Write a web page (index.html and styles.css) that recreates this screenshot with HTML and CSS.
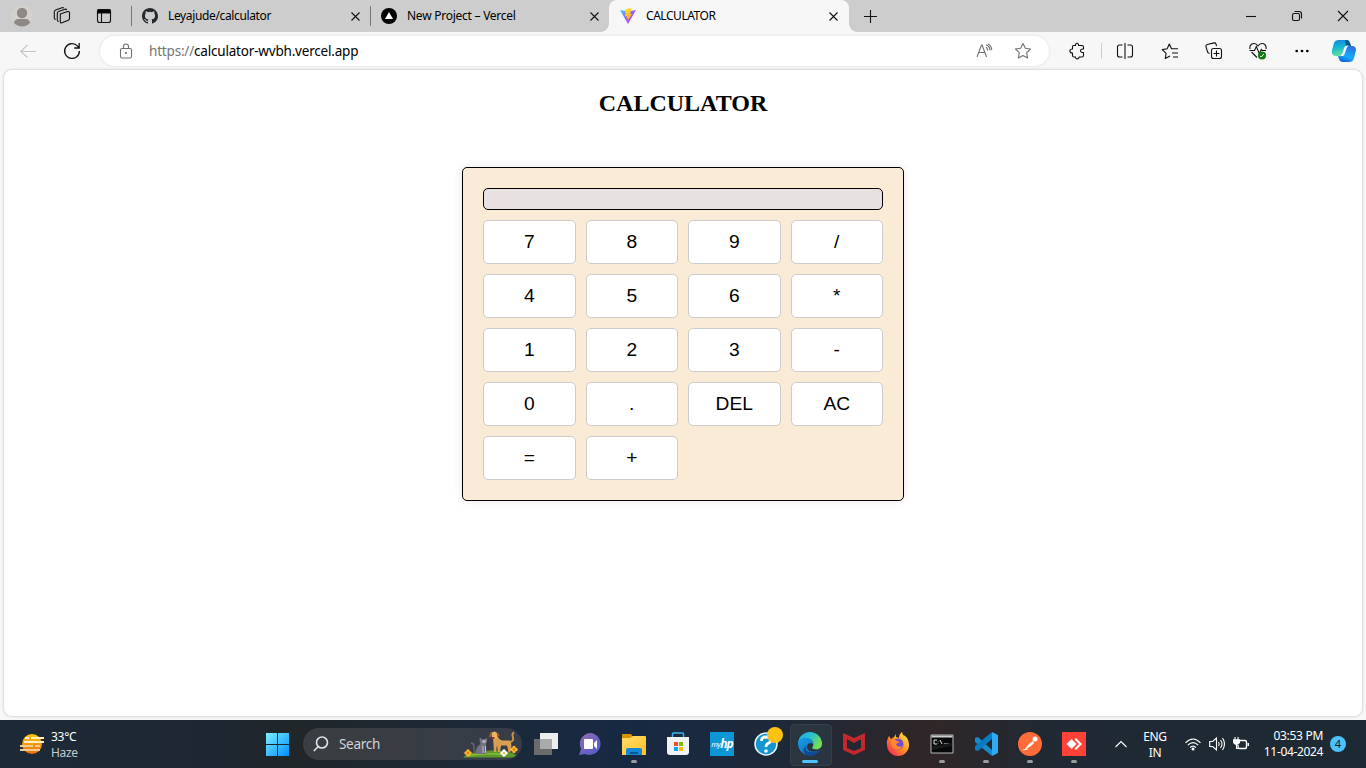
FILE: index.html
```
<!DOCTYPE html>
<html lang="en">
<head>
<meta charset="utf-8">
<title>CALCULATOR</title>
<link rel="stylesheet" href="styles.css">
</head>
<body>
<div class="browser">
  <header class="tabbar">
    <div class="tab-tools">
      <svg width="22" height="22" viewBox="0 0 22 22"><circle cx="11" cy="11" r="10.7" fill="#d5d2ce"/><circle cx="11" cy="8" r="5.2" fill="#8e8984"/><path d="M3 18c0-2 2-4 4-4h8c2 0 4 2 4 4a11 11 0 0 1-16 0z" fill="#8e8984"/></svg>
      <svg class="line" width="18" height="18" viewBox="0 0 18 18"><path d="M7.3 7 14.5 4.6Q16.5 4 16.5 6v5.5q0 1.300-1.200 1.800L9 15.800Q7.300 16.400 7.300 14.500zM4.300 13.500V6.500q0-1.500 1.300-2L12 2.200q1.200-.4 1.700.7M1.300 11.500V5q0-1.500 1.300-2L9 .8q1.200-.4 1.700.5M1.300 11.500l1.200 1.200M4.300 13.500l1.200 1.200"/></svg>
      <svg class="line" width="16" height="16" viewBox="0 0 16 16"><rect x="1.500" y="1.500" width="13" height="13" rx="2"/><path d="M1.500 3Q1.500 1.500 3 1.500h10q1.500 0 1.500 1.500v2h-13z" fill="#000"/><path d="M5.500 5v9"/></svg>
    </div>
    <div class="tab">
      <svg width="16" height="16" viewBox="0 0 16 16"><path fill="#24292f" d="M8 0C3.580 0 0 3.580 0 8c0 3.540 2.290 6.530 5.470 7.590.4.070.55-.17.55-.38 0-.19-.01-.82-.01-1.490-2.010.37-2.530-.49-2.690-.94-.09-.23-.48-.94-.82-1.130-.28-.15-.68-.52-.01-.53.63-.01 1.080.58 1.230.82.72 1.210 1.870.87 2.330.66.070-.52.28-.87.51-1.070-1.780-.2-3.640-.89-3.640-3.950 0-.87.31-1.590.82-2.150-.08-.2-.36-1.020.08-2.120 0 0 .67-.21 2.200.82a7.600 7.600 0 0 1 4 0c1.530-1.040 2.200-.82 2.200-.82.44 1.100.16 1.920.08 2.120.51.56.82 1.270.82 2.150 0 3.070-1.870 3.750-3.650 3.950.29.25.54.73.54 1.480 0 1.070-.01 1.930-.01 2.200 0 .21.15.46.55.38A8 8 0 0 0 8 0z"/></svg>
      <span class="tab-title t1">Leyajude/calculator</span>
      <svg class="line" width="9" height="9" viewBox="0 0 9 9"><path d="m.5.500 8 8m0-8-8 8"/></svg>
    </div>
    <div class="tab">
      <svg width="16" height="16" viewBox="0 0 16 16"><circle cx="8" cy="8" r="8"/><path d="m8 4 4 7H4z" fill="#fff"/></svg>
      <span class="tab-title t2">New Project – Vercel</span>
      <svg class="line" width="9" height="9" viewBox="0 0 9 9"><path d="m.5.500 8 8m0-8-8 8"/></svg>
    </div>
    <div class="tab active">
      <svg width="16" height="16" viewBox="0 0 16 16"><defs><linearGradient id="va" x2="1" y2=".8"><stop stop-color="#41d1ff"/><stop offset=".5" stop-color="#8d67fe"/><stop offset="1" stop-color="#bd34fe"/></linearGradient><linearGradient id="vb" x2="0" y2="1"><stop stop-color="#ffdd35"/><stop offset="1" stop-color="#ffa800"/></linearGradient></defs><path d="M0 2 8 3.500 16 2 8 16z" fill="url(#va)"/><path d="m11.500 0-6 1.200L5 8.300l2-.4-.6 2.700 1.700-.5-.6 3.500L12 5.800l-2 .4 1.500-5z" fill="url(#vb)"/></svg>
      <span class="tab-title t3">CALCULATOR</span>
      <svg class="line" width="9" height="9" viewBox="0 0 9 9"><path d="m.5.500 8 8m0-8-8 8"/></svg>
    </div>
    <svg class="line new-tab" width="15" height="15" viewBox="0 0 15 15"><path d="M7.500 1v13M1 7.500h13"/></svg>
    <div class="window-controls">
      <svg class="line" width="12" height="12" viewBox="0 0 12 12"><path d="M1 6.500h10"/></svg>
      <svg class="line" width="12" height="12" viewBox="0 0 12 12"><rect x="1.500" y="3.500" width="7" height="7" rx="1.500"/><path d="M3.500 1.500H8q2.500 0 2.500 2.500v4.500"/></svg>
      <svg class="line" width="12" height="12" viewBox="0 0 12 12"><path d="m1 1 10 10M11 1 1 11"/></svg>
    </div>
  </header>
  <div class="toolbar">
    <div class="nav">
      <svg class="line faint" width="16" height="14" viewBox="0 0 16 14"><path d="M16 7.500H1M7.500.8.800 7.500l6.700 6"/></svg>
      <svg class="line reload" width="18" height="18" viewBox="0 0 18 18"><path d="M16.400 9A7.400 7.400 0 1 1 14.600 4.200L16 6M16.200 1v5h-5"/></svg>
    </div>
    <div class="address">
      <svg class="line gray" width="14" height="16" viewBox="0 0 14 16"><rect x="1.500" y="5.500" width="11" height="9.500" rx="1.500"/><path d="M4.500 5.500V3.500a2.500 2.500 0 0 1 5 0v2"/><circle cx="7" cy="10" r=".5" fill="#555"/></svg>
      <span class="url"><span class="scheme">https://</span>calculator-wvbh.vercel.app</span>
      <svg class="line gray" width="16" height="16" viewBox="0 0 16 16"><path d="m1 14 4.500-12h.6L10.500 14M2.700 9.500h6.200M10 4.300q1.700 1 1.700 3.200M9.800 1.800q4.200 1.500 4.200 5.700M12 1q3.700 2 3.700 6"/></svg>
      <svg class="line gray" width="18" height="18" viewBox="0 0 18 18"><path d="m9 1.500 2.300 4.800 5.200.7-3.800 3.700.9 5.300L9 13.500 4.400 16l.9-5.300L1.500 7l5.200-.7z" stroke-linejoin="round"/></svg>
    </div>
    <div class="actions">
      <svg class="line a1" width="16" height="18" viewBox="0 0 16 18"><path d="M4.500 3.500h2C6 .5 10 .5 9.500 3.500H13q1.500 0 1.500 1.500v2c-4-.5-4 4 0 3.500v3q0 1.500-1.500 1.500h-3c.3 2.500-3.700 2.500-3.500 0H5q-1.500 0-1.500-1.500V11c-3.500 0-3.500-4 0-4V4.500q0-1 1-1z" stroke-linejoin="round"/></svg>
      <i class="divider"></i>
      <svg class="line a2" width="16" height="16" viewBox="0 0 16 16"><path d="M8 0v16M5.500 2H2.500Q.5 2 .5 4v8q0 2 2 2h3M10.500 2h3q2 0 2 2v8q0 2-2 2h-3"/></svg>
      <svg class="line a3" width="18" height="18" viewBox="0 0 18 18"><path d="M9 14 4.300 16.500l.8-5.200L1.200 7.600l5-.8L8.300 2l2.200 4.700H17M11 11h6M12 15h5" stroke-linejoin="round"/></svg>
      <svg class="line a4" width="18" height="18" viewBox="0 0 18 18"><rect x="6.500" y="6.500" width="10" height="10" rx="2"/><path d="M11.500 8.500v6m-3-3h6M4.500 11.500 2.700 10.500.9 4.500Q.7 3 2.200 2.500L9 .9q1.500-.3 2 1l.5 2.200"/></svg>
      <svg class="a5" width="18" height="18" viewBox="0 0 18 18"><path class="line" d="M1 7C0 1.500 6-.5 9 4c3-4.500 9-2.500 8 3M2.500 10 8 15.500M.500 8.500h5l1.800-4 3 7 2-4 1 1H17"/><circle cx="13" cy="13.500" r="4" fill="#107c10"/><path d="m11.300 14 1 1 2.500-3" stroke="#fff" fill="none"/></svg>
      <svg class="a6" width="14" height="4" viewBox="0 0 14 4"><circle cx="1.700" cy="2" r="1.350"/><circle cx="7" cy="2" r="1.350"/><circle cx="12.300" cy="2" r="1.350"/></svg>
      <svg class="a7" width="24" height="24" viewBox="0 0 24 24"><defs><linearGradient id="ca" x2=".2" y2="1"><stop stop-color="#1684d8"/><stop offset=".45" stop-color="#12b2d6"/><stop offset="1" stop-color="#64dfa0"/></linearGradient><linearGradient id="cb" x1=".6" x2=".2" y2="1"><stop stop-color="#2b71e6"/><stop offset=".6" stop-color="#13adf9"/><stop offset="1" stop-color="#1755dc"/></linearGradient></defs><path d="M7 1h8q2 0 3 3l1 3h-4q-2 0-3 3l-1 4q-1 3-4 3H4q-5 0-4-6L2 4q1-3 5-3z" fill="url(#ca)"/><path d="M13 1h2q2 0 3 3l1 3h-5z" fill="#075b8b"/><path d="M17 7h3q4 0 4 4l-2 8q-1 4-5 4H10q-2 0-3-3l-1-3h2q2 0 3-3l1.500-4Q14 7 17 7z" fill="url(#cb)"/><path d="M15 6.500q-2 0-3 3L10.500 14q-.8 2.500-2.500 3h2.500q1.500 0 2.300-2.500l1.700-5q.8-2.500 2.500-3z" fill="#f7f7f7"/></svg>
    </div>
  </div>
  <main class="page">
    <h2 class="title">CALCULATOR</h2>
    <section class="calculator">
      <div class="display"></div>
      <div class="keys">
        <button>7</button><button>8</button><button>9</button><button>/</button>
        <button>4</button><button>5</button><button>6</button><button>*</button>
        <button>1</button><button>2</button><button>3</button><button>-</button>
        <button>0</button><button>.</button><button>DEL</button><button>AC</button>
        <button>=</button><button>+</button>
      </div>
    </section>
  </main>
</div>
<footer class="taskbar">
  <div class="weather">
    <svg width="24" height="22" viewBox="0 0 24 22"><defs><linearGradient id="su" x2="0" y2="1"><stop stop-color="#ffc400"/><stop offset="1" stop-color="#f06c11"/></linearGradient></defs><circle cx="12" cy="11" r="10" fill="url(#su)"/><path d="M5 5h4m2 0h13M4 9h20" stroke="#fff0cb" stroke-width="2"/><path d="M0 13h13m2 0h5M0 17h20" stroke="#efcd94" stroke-width="2"/></svg>
    <div class="weather-text"><span>33°C</span><span class="haze">Haze</span></div>
  </div>
  <svg class="start" width="24" height="24" viewBox="0 0 24 24"><defs><linearGradient id="wi" gradientUnits="userSpaceOnUse" x1="1" y1="1" x2="23" y2="23"><stop stop-color="#7af0ff"/><stop offset="1" stop-color="#0792ff"/></linearGradient></defs><path d="M1 1h11v11H1zM13 1h11v11H13zM1 13h11v11H1zM13 13h11v11H13z" fill="url(#wi)"/></svg>
  <div class="search">
    <svg width="16" height="16" viewBox="0 0 16 16" fill="none" stroke="#e2e4e5" stroke-width="1.600"><circle cx="9" cy="6.500" r="5.500"/><path d="m5.300 10.500-4.500 4.500"/></svg>
    <span>Search</span>
    <svg width="56" height="28" viewBox="0 0 56 28"><path d="M0 27.500q5-5 16-5.500 14-3 24-1 9 1 13 4-1 2.500-5 2.500z" fill="#5c9a2a"/><path d="M6 25.500q15-3 36-1" stroke="#8bbd37" stroke-width="1.500" fill="none"/><path d="M14 22.500q-4-1-3-5 .5-4-3-4.500" stroke="#696674" stroke-width="1.400" fill="none"/><path d="M13 24q-1-7 4.500-10-1.500-2-.8-6.500l2.600 1.700h2.400L24 7.500q.8 4-1 6.500l.5 10z" fill="#747182"/><circle cx="21" cy="11.500" r="1.800" fill="#b3aebd"/><path d="M20 16v7m2.500-7v7" stroke="#c2bdcb"/><path d="M46 12.500q5-1 4-5-1.500-4 1-5" stroke="#d09043" stroke-width="2" fill="none"/><path d="M30 7h5q1 3 4 3.500h8q2.500 4 .5 11.500h-2l-1.500-6.500h-6L37 22h-2l-1-7-1 7h-2z" fill="#d89f51"/><path d="M28.500 3q3-3 5.500 0l.5 5-3.500 1.500-2-1.500z" fill="#e7b668"/><path d="m28.500 2-1.500 4 2-1M34 2.500l2 4" stroke="#a56127" stroke-width="1.500" fill="none"/><path d="M28.500 7h3v2h-3z" fill="#a02f1e"/><g fill="#fbbb2d"><circle cx="5" cy="21" r="1.700"/><circle cx="7" cy="23" r="1.700"/><circle cx="3" cy="23" r="1.700"/><circle cx="5" cy="25" r="1.700"/><circle cx="51" cy="17.500" r="1.700"/><circle cx="53" cy="19.500" r="1.700"/><circle cx="49" cy="19.500" r="1.700"/><circle cx="51" cy="21.500" r="1.700"/></g><g fill="#fff"><circle cx="41" cy="21" r="1.800"/><circle cx="43" cy="23" r="1.800"/><circle cx="39" cy="23" r="1.800"/><circle cx="41" cy="25" r="1.800"/></g><circle cx="5" cy="23" r="1.200" fill="#e67717"/><circle cx="41" cy="23" r="1.200" fill="#f1bb2c"/><circle cx="51" cy="19.500" r="1.200" fill="#e67717"/></svg>
  </div>
  <nav class="apps">
    <div class="app"><svg width="24" height="24" viewBox="0 0 24 24"><path d="M6 1h18v16H6z" fill="#eceeed"/><path d="M0 7h18v16H0z" fill="#6b6b6b"/><path d="M6 7h12v10H6z" fill="#a9aaa9"/></svg></div>
    <div class="app"><svg width="24" height="24" viewBox="0 0 24 24"><defs><linearGradient id="ch" x2="1" y2="1"><stop stop-color="#956db0"/><stop offset="1" stop-color="#4c59ce"/></linearGradient></defs><path d="M12 1a11 11 0 1 1-5 21l-6 1 2-6A11 11 0 0 1 12 1z" fill="url(#ch)"/><rect x="6" y="7" width="9" height="10" rx="1" fill="#fff"/><path d="m16 11 3-3v9l-3-3z" fill="#fff"/></svg></div>
    <div class="app running"><svg width="24" height="24" viewBox="0 0 24 24"><defs><linearGradient id="fo" x2="1" y2="1"><stop stop-color="#ffdc70"/><stop offset="1" stop-color="#ffc220"/></linearGradient></defs><path d="M0 4V3q0-1 1-1h8l2 3h12q1 0 1 1v5H0z" fill="#d99400"/><path d="M0 6h8l3-2h12q1 0 1 1v18H0z" fill="url(#fo)"/><path d="M4 23v-5q0-2 2-2h12q2 0 2 2v5z" fill="#1687d9"/><path d="M8 20h8v2H8z" fill="#075997"/></svg></div>
    <div class="app"><svg width="24" height="24" viewBox="0 0 24 24"><path d="M6.500 6V2q0-1 1-1h9q1 0 1 1v4" stroke="#38b6ef" stroke-width="1.500" fill="none"/><path d="M1 5h22v15q0 3-3 3H4q-3 0-3-3z" fill="#f1f2f3"/><path d="M8 10h4v4H8z" fill="#f25022"/><path d="M13 10h4v4h-4z" fill="#7fba00"/><path d="M8 15h4v4H8z" fill="#00a4ef"/><path d="M13 15h4v4h-4z" fill="#ffb900"/></svg></div>
    <div class="app"><div class="myhp"><span>my</span><b>hp</b></div></div>
    <div class="app help"><svg width="24" height="24" viewBox="0 0 24 24"><circle cx="12" cy="12" r="11" fill="#1395d1" stroke="#e9f6fb" stroke-width="1.500"/><path d="M7.500 9q0-4 4.500-4t4.500 3.500q0 2-2.500 3-2 1-2 3.500" fill="none" stroke="#fff" stroke-width="2.800"/><circle cx="12" cy="19" r="1.800" fill="#fff"/></svg><i class="dot"></i></div>
    <div class="app current"><svg width="24" height="24" viewBox="0 0 24 24"><defs><linearGradient id="ea" x2="1" y2=".5"><stop stop-color="#22afe8"/><stop offset=".5" stop-color="#26bfd1"/><stop offset="1" stop-color="#75dd51"/></linearGradient><linearGradient id="eb" x2="1" y2="1"><stop stop-color="#159ee5"/><stop offset="1" stop-color="#1167b8"/></linearGradient></defs><path d="M0 12a12 12 0 0 1 24 0c0 5-6 7-10 4 3-4 1-9-5-9-4 0-8 2-9 5z" fill="url(#ea)"/><path d="M0 12c0-5 5-7 9-6 4 0 6 3 6 6-2-2-6-1-6 3 0 5 7 6 13 3A12 12 0 0 1 0 12z" fill="url(#eb)"/><path d="M9 13c-4 5 1 10 13 5-3 5-8 6-11 6-6-2-8-7-2-11z" fill="#104b94"/></svg></div>
    <div class="app"><svg width="24" height="24" viewBox="0 0 24 24"><path d="m1 1 11 5 11-5v17l-11 5-11-5z" fill="#c3282d"/><path d="m5 7 7 4 7-4v9l-7 3-7-3z" fill="#222831"/></svg></div>
    <div class="app"><svg width="24" height="24" viewBox="0 0 24 24"><defs><linearGradient id="ff" x1="1" x2="0" y2="1"><stop stop-color="#fff34f"/><stop offset=".45" stop-color="#ff991f"/><stop offset="1" stop-color="#ef1467"/></linearGradient></defs><path d="m3 4 2 3 3-2 2-3v3l3 1q0-4 3-6l1 3c4 1 6 6 6 10a11 11 0 0 1-22 0Q0 9 3 4z" fill="url(#ff)"/><circle cx="12" cy="12" r="5.500" fill="#7948cd"/><path d="M5 8q4-1 6 1l3 1-4 2q1 4 6 2-2 5-7 3-5-3-4-9z" fill="#ff8a2b"/></svg></div>
    <div class="app running"><svg width="24" height="24" viewBox="0 0 24 24"><path d="M1 3h22v18H1z" fill="#070909" stroke="#b4b9bc"/><path d="M1.500 3.500h21v2h-21z" fill="#cbd1d3"/><path d="M7 8H4v4h3m1-3v.5m0 2v.5m2-4 2 4m2 0h5" stroke="#e0e0e0" fill="none"/><path d="M2 14 22 11v3L2 18z" fill="#15191a"/></svg></div>
    <div class="app running"><svg width="24" height="24" viewBox="0 0 24 24"><path d="m1 6 3-1 14 13v6L1 10z" fill="#168bd2"/><path d="m1 18 3 1L18 7V0L1 14z" fill="#087bc3"/><path d="m18 0 6 3v18l-6 3z" fill="#30aaf0"/></svg></div>
    <div class="app running"><svg width="24" height="24" viewBox="0 0 24 24"><circle cx="12" cy="12" r="12" fill="#ff6c37"/><path d="m6 18 5-6 4-3 1 2-3 3z" fill="#fff"/><circle cx="17" cy="7" r="2.500" fill="#fff"/><path d="m5 18 5-1" stroke="#fff"/></svg></div>
    <div class="app running"><svg width="24" height="24" viewBox="0 0 24 24"><path d="M0 0h24v24H0z" fill="#ff4235"/><path d="m9.500 7 5 5-5 5-5-5zM12.500 7.500 14 6l6 6-6 6-1.500-1.500L17 12z" fill="#fff"/></svg></div>
  </nav>
  <div class="tray">
    <svg class="tray-icon" width="12" height="8" viewBox="0 0 12 8"><path d="m.5 7 5.500-5.500L11.500 7"/></svg>
    <div class="lang"><span>ENG</span><span>IN</span></div>
    <svg class="tray-icon wifi" width="16" height="14" viewBox="0 0 16 14"><path d="M.5 5.800q7.500-7.600 15 0M2.800 8.200q5.200-5.200 10.400 0M5.100 10.500q2.900-2.900 5.800 0"/><circle cx="8" cy="12" r="1.500" fill="#fff" stroke="none"/></svg>
    <svg class="tray-icon vol" width="16" height="14" viewBox="0 0 16 14"><path d="M.7 4.500h3L7.500 1v12L3.700 9.500h-3zM9.500 5q1.500 2 0 4M11.500 3q3 4 0 8M13.500 1q4 6 0 12"/></svg>
    <svg class="tray-icon bat" width="17" height="14" viewBox="0 0 17 14"><path d="M7 3.500h5q1.500 0 1.500 1.500v5q0 1.500-1.500 1.500H6.500Q5 11.500 5 10V8M15.300 6v3" stroke-width="1.400"/><path d="M2 0v3m3-3v3M.7 3h5.600v2.500L4.800 7H2.200L.7 5.500zM3.500 7v4.500H6" fill="none"/><path d="M.7 3h5.600v2.500L4.800 7H2.200L.7 5.500z" fill="#fff"/></svg>
    <div class="clock"><span class="time">03:53 PM</span><span class="date">11-04-2024</span></div>
    <span class="count">4</span>
  </div>
</footer>
</body>
</html>
```
FILE: styles.css
```
* { box-sizing: border-box; }
body { margin: 0; width: 1366px; height: 768px; overflow: hidden; font-family: "Noto Sans", "Open Sans", sans-serif; font-size: 12px; color: #000; }
svg { display: block; flex: none; overflow: visible; }
.line { fill: none; stroke: #111; stroke-width: 1.1; }
.gray { stroke: #717171; }
.faint { stroke: #c3c3c3; }
.reload { stroke-width: 1.3; }

.browser { display: flex; flex-direction: column; height: 720px; background: #f7f7f7; }
.tabbar { display: flex; align-items: center; height: 32px; background: #cdcdcd; }
.tab-tools { display: flex; align-items: center; width: 131px; padding-left: 11px; }
.tab-tools svg:nth-child(2) { margin-left: 20px; }
.tab-tools svg:nth-child(3) { margin-left: 25px; }
.tab { display: flex; align-items: center; width: 239px; height: 32px; padding: 0 10px 0 11px; background: linear-gradient(#777, #777) 0 6px / 1px 20px no-repeat; }
.tab-title { flex: 1; margin-left: 10px; white-space: nowrap; line-height: 16px; }
.t1 { letter-spacing: -.36px; }
.t2 { letter-spacing: -.25px; }
.t3 { letter-spacing: -.45px; }
.tab.active { position: relative; width: 240px; padding: 0 11px; background: #f7f7f7; border-radius: 8px 8px 0 0; }
.tab.active::before, .tab.active::after { content: ""; position: absolute; bottom: 0; width: 8px; height: 8px; }
.tab.active::before { left: -8px; background: radial-gradient(circle at 0 0, transparent 7.5px, #f7f7f7 8px); }
.tab.active::after { right: -8px; background: radial-gradient(circle at 100% 0, transparent 7.5px, #f7f7f7 8px); }
.new-tab { margin-left: 14px; }
.window-controls { display: flex; gap: 34px; margin-left: auto; padding-right: 17px; }

.toolbar { display: flex; align-items: center; height: 38px; }
.nav { display: flex; align-items: center; width: 100px; padding-left: 20px; gap: 27px; }
.address { display: flex; align-items: center; width: 949px; height: 30px; padding: 0 17px 0 19px; border-radius: 15px; background: #fff; box-shadow: 0 0 3px #ddd; }
.url { flex: 1; margin-left: 16px; font-size: 13.5px; letter-spacing: -.19px; line-height: 20px; }
.scheme { color: #747474; }
.address svg:last-child { margin-left: 22px; }
.actions { display: flex; align-items: center; }
.a1 { margin-left: 20px; }
.divider { width: 1px; height: 16px; margin-left: 16px; background: #cfcfcf; }
.a2 { margin-left: 15px; }
.a3 { margin-left: 28px; }
.a4, .a5 { margin-left: 26px; }
.a6 { margin-left: 28px; }
.a7 { margin-left: 23px; }

.page { width: 1358px; height: 646px; margin: 0 4px; padding-top: 20px; background: #fff; border-radius: 8px; box-shadow: 0 0 2px 1px #d8d8d8; }
.title { margin: 0; text-align: center; font: bold 24px/27px "Liberation Serif", serif; }
.calculator { width: 442px; margin: 50px auto 0; padding: 20px; border: 1px solid #000; border-radius: 5px; background: #faebd7; box-shadow: 0 0 10px rgba(0, 0, 0, .1); }
.display { height: 22px; border: 1px solid #000; border-radius: 5px; background: #e7e1e1; }
.keys { display: grid; grid-template-columns: repeat(4, 1fr); gap: 10px; margin-top: 10px; }
.keys button { height: 44px; padding: 0 0 1px; border: 1px solid #ccc; border-radius: 5px; background: #fff; color: #000; font: 19.2px/22px "Liberation Sans", sans-serif; }

.taskbar { display: flex; align-items: center; height: 48px; color: #fff; background: linear-gradient(90deg, #1d2a37 0, #1e2632 16%, #202629 21%, #1d2937 34%, #172943 46%, #1e2938 58%, #302627 68%, #202934 77%, #1d2a33 100%); }
.weather { display: flex; align-items: center; width: 265px; padding-left: 20px; }
.weather-text { display: flex; flex-direction: column; margin-left: 7px; line-height: 16px; letter-spacing: -.3px; padding-top: 2px; }
.haze { color: #c3c9cf; }
.search { display: flex; align-items: center; width: 219px; height: 32px; margin-left: 14px; padding: 0 3px 0 10px; border-radius: 16px; background: linear-gradient(90deg, #3a3e40, #363c49); }
.search span { flex: 1; margin-left: 10px; font-size: 13.5px; letter-spacing: -.3px; color: #d2d5d8; }
.apps { display: flex; margin-left: 2px; }
.app { position: relative; display: flex; align-items: center; justify-content: center; width: 44px; height: 48px; }
.running::after { content: ""; position: absolute; left: 19px; top: 40px; width: 6px; height: 3px; border-radius: 2px; background: #9a9da0; }
.current::before { content: ""; position: absolute; left: 2px; top: 4px; width: 40px; height: 40px; border: 1px solid #353f4a; border-radius: 4px; background: #2b3540; }
.current svg { position: relative; }
.current::after { content: ""; position: absolute; left: 14px; top: 40px; width: 16px; height: 3px; border-radius: 2px; background: #4cc2ff; }
.myhp { display: flex; align-items: center; justify-content: center; width: 24px; height: 24px; background: #0b96d5; font-style: italic; line-height: 20px; }
.myhp span { font-size: 7.5px; letter-spacing: -.5px; }
.myhp b { font-size: 12px; letter-spacing: -1px; }
.dot { position: absolute; left: 23px; top: 7px; width: 16px; height: 16px; border-radius: 50%; background: #ffc20e; }
.tray { display: flex; align-items: center; flex: 1; padding-left: 19px; }
.tray-icon { fill: none; stroke: #fff; stroke-width: 1.1; }
.lang { display: flex; flex-direction: column; align-items: center; width: 26px; margin-left: 15px; padding-top: 2px; line-height: 16px; letter-spacing: -.3px; }
.wifi { margin-left: 17px; }
.vol, .bat { margin-left: 8px; }
.clock { display: flex; flex-direction: column; align-items: flex-end; width: 66px; margin-left: 7px; line-height: 16px; white-space: nowrap; }
.time { letter-spacing: -.3px; }
.date { letter-spacing: -.35px; }
.count { width: 16px; height: 16px; margin-left: 7px; border-radius: 50%; background: #4cc2ff; color: #101820; font-size: 11px; line-height: 16px; text-align: center; }
```
